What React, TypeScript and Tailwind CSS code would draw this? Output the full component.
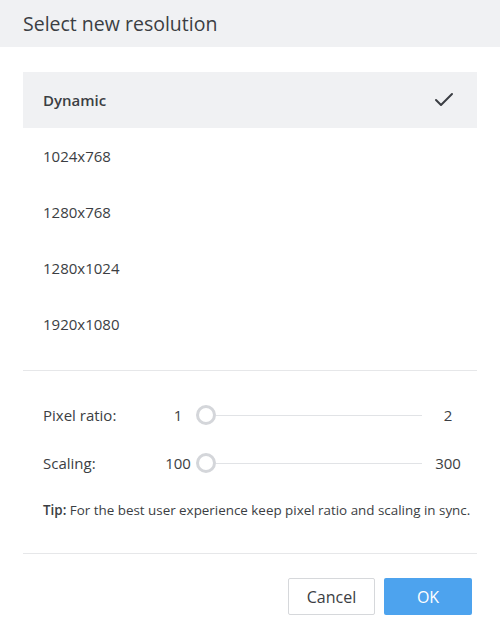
import { Check } from 'lucide-react'

const resolutions = ['Dynamic', '1024x768', '1280x768', '1280x1024', '1920x1080']

function SliderRow({ label, min, max }: { label: string; min: string; max: string }) {
  return (
    <div className="flex h-[30px] items-center pl-5">
      <span className="w-[117px]">{label}</span>
      <span className="w-9 text-center">{min}</span>
      <div className="flex w-[226px] items-center">
        <span className="h-5 w-5 shrink-0 rounded-full border-[3px] border-[#d4d6da] bg-white" />
        <span className="h-px flex-1 bg-[#e1e3e6]" />
      </div>
      <span className="w-[52px] text-center">{max}</span>
    </div>
  )
}

export default function App() {
  const selected = 'Dynamic'

  return (
    <div
      className="h-[640px] w-[500px] bg-white text-[#3b3e43]"
      style={{ fontFamily: '"Open Sans", sans-serif' }}
    >
      <div className="flex h-[47px] items-center bg-[#f0f1f3] px-[23px] text-[19.5px]">
        Select new resolution
      </div>

      <div className="px-[23px] pt-[25px]">
        <ul>
          {resolutions.map((r) => (
            <li
              key={r}
              className={`flex h-14 items-center justify-between pl-5 pr-[21px] text-[15px] ${
                r === selected ? 'bg-[#f0f1f3] font-semibold' : ''
              }`}
            >
              <span>{r}</span>
              {r === selected && <Check size={24} strokeWidth={2} className="text-[#3b3e43]" />}
            </li>
          ))}
        </ul>

        <div className="mt-[18px] h-px bg-[#e6e7e9]" />

        <div className="mt-[29px] flex flex-col gap-[18px] text-[15px]">
          <SliderRow label="Pixel ratio:" min="1" max="2" />
          <SliderRow label="Scaling:" min="100" max="300" />
        </div>

        <p className="mt-[23px] pl-5 text-[13.4px] leading-[18px]">
          <span className="font-semibold">Tip:</span> For the best user experience keep pixel ratio
          and scaling in sync.
        </p>

        <div className="mt-[34px] h-px bg-[#e6e7e9]" />

        <div className="mt-6 flex justify-end gap-[9px] pr-[5px]">
          <button className="h-[37px] w-[87px] rounded-[2px] border border-[#d6d8db] bg-white text-[16px] text-[#3b3e43]">
            Cancel
          </button>
          <button className="h-[37px] w-[88px] rounded-[2px] bg-[#4da3ee] text-[16px] text-white">
            OK
          </button>
        </div>
      </div>
    </div>
  )
}
